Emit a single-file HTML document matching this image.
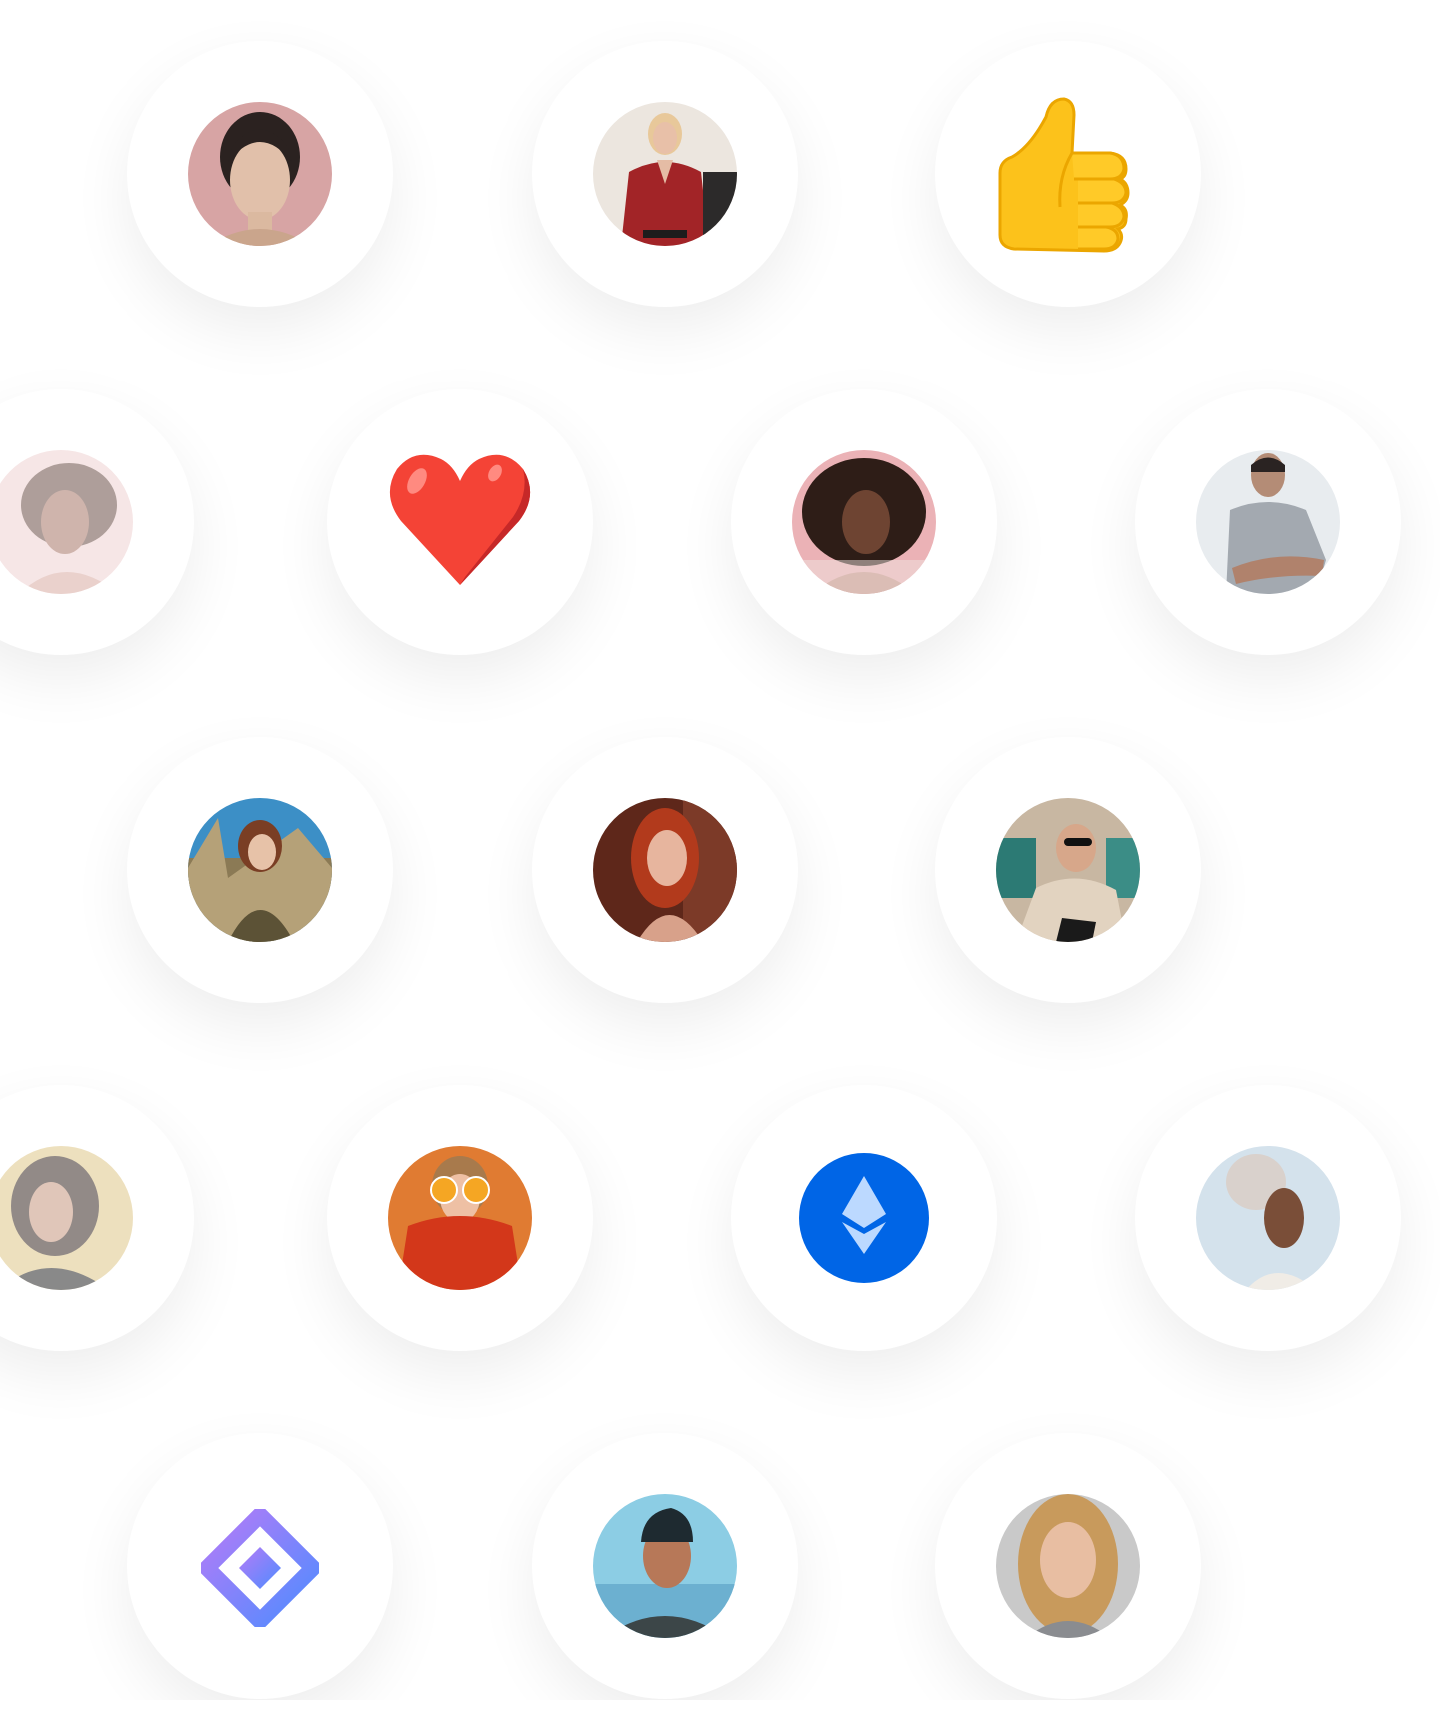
<!DOCTYPE html>
<html><head><meta charset="utf-8"><style>
html,body{margin:0;padding:0;background:#fff;width:1440px;height:1734px;overflow:hidden;position:relative}
.wrap{position:absolute;left:0;top:0;width:1440px;height:1700px;overflow:hidden}
.c{position:absolute;width:266px;height:266px;border-radius:50%;background:#fff;box-shadow:0 24px 60px rgba(0,0,0,0.07);}
.a{position:absolute;left:61px;top:61px;width:144px;height:144px;border-radius:50%;overflow:hidden}
.a svg{display:block}
.fade{opacity:.55}
</style></head><body><div class="wrap">

<!-- row 1 -->
<div class="c" style="left:127px;top:41px"><div class="a"><svg width="144" height="144" viewBox="0 0 144 144"><rect width="144" height="144" fill="#d7a4a4"/><ellipse cx="72" cy="55" rx="40" ry="45" fill="#2b2220"/><ellipse cx="72" cy="78" rx="30" ry="40" fill="#e1c0aa"/><path d="M40 60 Q72 20 104 60 L100 45 Q72 10 44 45Z" fill="#2b2220"/><rect x="60" y="110" width="24" height="20" fill="#dbb9a0"/><path d="M20 144 Q72 110 124 144Z" fill="#caa58c"/></svg></div></div>

<div class="c" style="left:532px;top:41px"><div class="a"><svg width="144" height="144" viewBox="0 0 144 144"><rect width="144" height="144" fill="#ece6df"/><ellipse cx="72" cy="32" rx="17" ry="21" fill="#e8c89a"/><ellipse cx="72" cy="36" rx="12" ry="16" fill="#e8c0a8"/><path d="M28 144 L36 70 Q72 50 108 70 L116 144Z" fill="#a22427"/><path d="M64 58 L72 82 L80 58Z" fill="#e5bca5"/><rect x="110" y="70" width="34" height="74" fill="#2c2a2a"/><rect x="50" y="128" width="44" height="8" fill="#1c1c1c"/></svg></div></div>

<div class="c" style="left:935px;top:41px"><svg style="position:absolute;left:59px;top:56px" width="148" height="156" viewBox="0 0 148 156"><path d="M6 76 Q6 64 18 60 Q36 50 52 20 Q56 2 70 2 Q80 4 80 18 L78 56 L116 56 Q132 58 132 72 Q132 80 126 82 Q134 86 134 96 Q134 104 126 108 Q134 112 132 122 Q132 130 124 132 Q130 138 126 146 Q122 154 110 154 L20 152 Q6 150 6 138Z" fill="#fcc21b" stroke="#eba600" stroke-width="3"/><path d="M78 56 L116 56 Q130 58 130 72 Q128 82 116 82 L80 82 M84 82 L120 82 Q132 86 132 96 Q130 106 118 106 L84 106 M84 106 L118 106 Q130 110 130 120 Q128 130 116 130 L84 130 M84 130 L112 130 Q124 132 124 142 Q122 152 110 152 L84 152" fill="#ffca28" stroke="#eba600" stroke-width="3"/><path d="M78 56 Q64 80 66 110" fill="none" stroke="#eba600" stroke-width="3"/></svg></div>

<!-- row 2 -->
<div class="c" style="left:-72px;top:389px"><div class="a fade"><svg width="144" height="144" viewBox="0 0 144 144"><rect width="144" height="144" fill="#f0d2d2"/><ellipse cx="80" cy="55" rx="48" ry="42" fill="#6d5048"/><ellipse cx="76" cy="72" rx="24" ry="32" fill="#a8786a"/><path d="M30 144 Q76 100 130 144Z" fill="#d9aca4"/></svg></div></div>

<div class="c" style="left:327px;top:389px"><svg style="position:absolute;left:60px;top:62px" width="146" height="136" viewBox="0 0 146 136"><path d="M73 134 L14 70 Q-6 44 10 18 Q28 -4 54 8 Q66 14 73 30 Q80 14 92 8 Q118 -4 136 18 Q152 44 132 70Z" fill="#f44336"/><path d="M136 18 Q152 44 132 70 L73 134 L78 126 L126 66 Q142 42 136 18Z" fill="#c62828"/><ellipse cx="30" cy="30" rx="8" ry="14" transform="rotate(30 30 30)" fill="#ff8a80"/><ellipse cx="108" cy="22" rx="6" ry="9" transform="rotate(30 108 22)" fill="#ff8a80"/></svg></div>

<div class="c" style="left:731px;top:389px"><div class="a"><svg width="144" height="144" viewBox="0 0 144 144"><rect width="144" height="144" fill="#ebb2b6"/><ellipse cx="72" cy="62" rx="62" ry="54" fill="#2e1d17"/><ellipse cx="74" cy="72" rx="24" ry="32" fill="#6e4432"/><path d="M20 144 Q72 100 124 144Z" fill="#c6978a"/><rect x="0" y="110" width="144" height="34" fill="#efe3e0" opacity=".5"/></svg></div></div>

<div class="c" style="left:1135px;top:389px"><div class="a"><svg width="144" height="144" viewBox="0 0 144 144"><rect width="144" height="144" fill="#e8ecef"/><ellipse cx="72" cy="25" rx="17" ry="22" fill="#b48c76"/><path d="M55 15 Q72 0 89 15 L89 22 L55 22Z" fill="#2a2322"/><path d="M30 144 L34 60 Q72 44 110 60 L130 110 L120 144Z" fill="#a3a9b0"/><path d="M36 118 Q80 100 128 110 L126 126 Q80 124 40 134Z" fill="#b0826c"/></svg></div></div>

<!-- row 3 -->
<div class="c" style="left:127px;top:737px"><div class="a"><svg width="144" height="144" viewBox="0 0 144 144"><rect width="144" height="144" fill="#3c8fc6"/><rect y="60" width="144" height="84" fill="#8b7a55"/><path d="M0 70 L30 20 L40 80 L110 30 L144 70 L144 144 L0 144Z" fill="#b5a178"/><ellipse cx="72" cy="48" rx="22" ry="26" fill="#7a3e24"/><ellipse cx="74" cy="54" rx="14" ry="18" fill="#e7c2a8"/><path d="M40 144 Q72 80 106 144Z" fill="#5c5236"/></svg></div></div>

<div class="c" style="left:532px;top:737px"><div class="a"><svg width="144" height="144" viewBox="0 0 144 144"><rect width="144" height="144" fill="#5e271a"/><rect x="90" width="54" height="144" fill="#7c3a28"/><ellipse cx="72" cy="60" rx="34" ry="50" fill="#b23a1c"/><ellipse cx="74" cy="60" rx="20" ry="28" fill="#e7b59e"/><path d="M44 144 Q76 90 110 144Z" fill="#d8a18a"/></svg></div></div>

<div class="c" style="left:935px;top:737px"><div class="a"><svg width="144" height="144" viewBox="0 0 144 144"><rect width="144" height="144" fill="#c8b7a2"/><rect y="40" width="40" height="60" fill="#2c7a74"/><rect x="110" y="40" width="34" height="60" fill="#3b8d86"/><ellipse cx="80" cy="50" rx="20" ry="24" fill="#d7a78a"/><rect x="68" y="40" width="28" height="8" rx="4" fill="#111"/><path d="M20 144 L40 90 Q80 70 120 92 L130 144Z" fill="#e2d3c0"/><path d="M60 144 L66 120 L100 124 L96 144Z" fill="#1a1a1a"/></svg></div></div>

<!-- row 4 -->
<div class="c" style="left:-72px;top:1085px"><div class="a fade"><svg width="144" height="144" viewBox="0 0 144 144"><rect width="144" height="144" fill="#e0c88a"/><ellipse cx="66" cy="60" rx="44" ry="50" fill="#3a2c26"/><ellipse cx="62" cy="66" rx="22" ry="30" fill="#c89880"/><path d="M10 144 Q60 100 120 144Z" fill="#2a2a2a"/></svg></div></div>

<div class="c" style="left:327px;top:1085px"><div class="a"><svg width="144" height="144" viewBox="0 0 144 144"><rect width="144" height="144" fill="#e07b32"/><ellipse cx="72" cy="40" rx="28" ry="30" fill="#a87a4c"/><ellipse cx="72" cy="52" rx="20" ry="24" fill="#eec0a4"/><circle cx="56" cy="44" r="13" fill="#f5a623" stroke="#fff" stroke-width="2"/><circle cx="88" cy="44" r="13" fill="#f5a623" stroke="#fff" stroke-width="2"/><path d="M10 144 L20 80 Q72 60 124 80 L134 144Z" fill="#d3371a"/></svg></div></div>

<div class="c" style="left:731px;top:1085px"><svg style="position:absolute;left:67px;top:67px" width="132" height="132" viewBox="0 0 132 132"><circle cx="66" cy="66" r="65" fill="#0065e6"/><path d="M66 1 A65 65 0 0 1 66 131 A62 62 0 0 0 66 1Z" fill="#0056c4"/><path d="M66 24 L88 62 L66 76 L44 62Z" fill="#bcd9ff"/><path d="M44 70 L66 82 L88 70 L66 102Z" fill="#bcd9ff"/></svg></div>

<div class="c" style="left:1135px;top:1085px"><div class="a"><svg width="144" height="144" viewBox="0 0 144 144"><rect width="144" height="144" fill="#d4e2ec"/><ellipse cx="60" cy="36" rx="30" ry="28" fill="#d9d1cc"/><ellipse cx="88" cy="72" rx="20" ry="30" fill="#7a4e38"/><path d="M50 144 Q80 110 120 144Z" fill="#f0ece6"/></svg></div></div>

<!-- row 5 -->
<div class="c" style="left:127px;top:1433px"><svg style="position:absolute;left:74px;top:76px" width="118" height="118" viewBox="0 0 118 118"><defs><linearGradient id="g" x1="0" y1="0" x2="1" y2="1"><stop offset="0" stop-color="#b57bf7"/><stop offset="1" stop-color="#4f8cff"/></linearGradient></defs><path d="M59 6 L112 59 L59 112 L6 59Z" fill="none" stroke="url(#g)" stroke-width="16" stroke-linejoin="round"/><path d="M59 38 L80 59 L59 80 L38 59Z" fill="url(#g)"/></svg></div>

<div class="c" style="left:532px;top:1433px"><div class="a"><svg width="144" height="144" viewBox="0 0 144 144"><rect width="144" height="144" fill="#8ccde4"/><rect y="90" width="144" height="54" fill="#6cb0d0"/><ellipse cx="74" cy="62" rx="24" ry="32" fill="#b77858"/><path d="M48 48 Q50 18 78 14 Q100 20 100 48Z" fill="#1e2a30"/><path d="M10 144 Q72 100 134 144Z" fill="#3c4648"/></svg></div></div>

<div class="c" style="left:935px;top:1433px"><div class="a"><svg width="144" height="144" viewBox="0 0 144 144"><rect width="144" height="144" fill="#c9c9c9"/><ellipse cx="72" cy="70" rx="50" ry="70" fill="#c89a5c"/><ellipse cx="72" cy="66" rx="28" ry="38" fill="#e8bea2"/><path d="M30 144 Q72 110 114 144Z" fill="#8a8c90"/></svg></div></div>

</div></body></html>
